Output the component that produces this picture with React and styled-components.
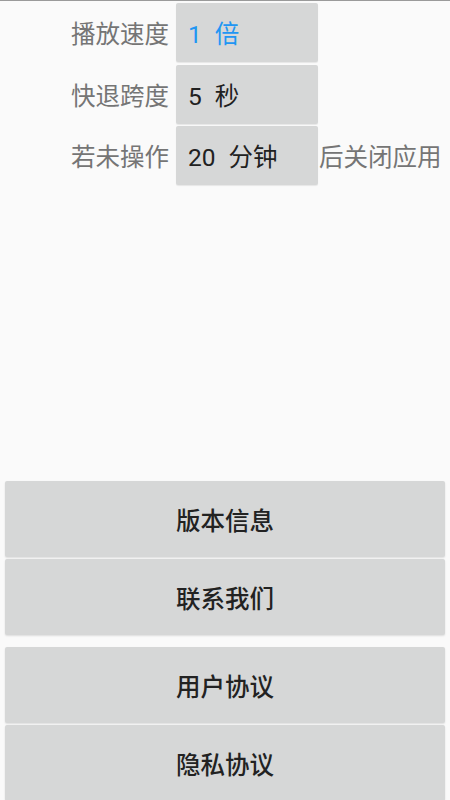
import React from "react";
import styled, { createGlobalStyle } from "styled-components";

const Global = createGlobalStyle`
  html, body { margin: 0; padding: 0; background: #fafafa; }
  body { font-family: Roboto, "Noto Sans CJK SC", sans-serif; }
  * { box-sizing: border-box; }
`;

const Page = styled.div`
  height: 800px;
  overflow: hidden;
  border-top: 1px solid #9a9a9a;
  display: flex;
  flex-direction: column;
`;

const Settings = styled.div`
  display: flex;
  flex-direction: column;
  gap: 2.5px;
  padding-top: 2px;
`;

const Row = styled.div`
  display: flex;
  align-items: center;
  height: 59px;
`;

const Label = styled.div`
  width: 176px;
  padding-right: 7px;
  text-align: right;
  font-size: 24.5px;
  color: #757575;
  white-space: nowrap;
`;

const Value = styled.div`
  width: 142px;
  height: 59px;
  background: #d6d7d7;
  border-radius: 2px;
  box-shadow: 0 1px 1px rgba(0, 0, 0, 0.08);
  display: flex;
  align-items: center;
  padding-left: 12px;
  font-size: 24.5px;
  word-spacing: 7px;
  color: ${(p) => (p.$active ? "#2196f3" : "#212121")};
  white-space: nowrap;
`;

const Suffix = styled.div`
  padding-left: 1px;
  font-size: 24.5px;
  color: #757575;
  white-space: nowrap;
`;

const Buttons = styled.div`
  margin-top: auto;
  display: flex;
  flex-direction: column;
  padding: 0 5px;
  margin-bottom: -1px;
`;

const Group = styled.div`
  display: flex;
  flex-direction: column;
  gap: 2px;
  & + & { margin-top: 12px; }
`;

const Button = styled.div`
  height: 76px;
  background: #d6d7d7;
  border-radius: 2px;
  box-shadow: 0 1px 2px rgba(0, 0, 0, 0.12);
  display: flex;
  align-items: center;
  justify-content: center;
  font-size: 24.5px;
  font-weight: 500;
  color: #222;
`;

export default function App() {
  return (
    <>
      <Global />
      <Page>
        <Settings>
          <Row>
            <Label>播放速度</Label>
            <Value $active>1 倍</Value>
          </Row>
          <Row>
            <Label>快退跨度</Label>
            <Value>5 秒</Value>
          </Row>
          <Row>
            <Label>若未操作</Label>
            <Value>20 分钟</Value>
            <Suffix>后关闭应用</Suffix>
          </Row>
        </Settings>
        <Buttons>
          <Group>
            <Button>版本信息</Button>
            <Button>联系我们</Button>
          </Group>
          <Group>
            <Button>用户协议</Button>
            <Button>隐私协议</Button>
          </Group>
        </Buttons>
      </Page>
    </>
  );
}
